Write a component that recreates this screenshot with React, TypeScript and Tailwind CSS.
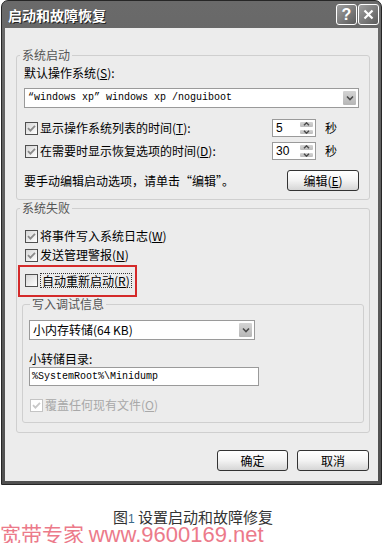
import React from "react";

const ui = "font-['Noto_Sans_CJK_SC',sans-serif]";
const mono = "font-['Liberation_Mono','Noto_Sans_CJK_SC',monospace]";

function Check({ checked = false, disabled = false }: { checked?: boolean; disabled?: boolean }) {
  return (
    <span
      className={`flex h-[13px] w-[13px] shrink-0 items-center justify-center border ${
        disabled ? "border-[#c4c4c4] bg-white" : "border-[#4f4f4f] bg-gradient-to-br from-[#d6d6d6] to-white"
      }`}
    >
      {checked && (
        <svg width="9" height="9" viewBox="0 0 9 9">
          <path d="M1 4.2 L3.4 6.6 L8 1.8" fill="none" stroke={disabled ? "#c8c8c8" : "#8a8a8a"} strokeWidth="1.8" />
        </svg>
      )}
    </span>
  );
}

function ArrowBtn() {
  return (
    <span className="flex w-[15px] items-center justify-center self-stretch rounded-[2px] border border-white bg-gradient-to-b from-[#d4d4d4] to-[#b6b6b6]">
      <svg width="8" height="6" viewBox="0 0 8 6">
        <path d="M1 1.5 L4 4.5 L7 1.5" fill="none" stroke="#4a4a4a" strokeWidth="1.6" />
      </svg>
    </span>
  );
}

function Select({ children, w }: { children: React.ReactNode; w: string }) {
  return (
    <div className={`flex h-[20px] items-stretch border border-[#9a9a9a] bg-white p-[1px] ${w}`}>
      <span className="flex flex-1 items-center pl-[2px]">{children}</span>
      <ArrowBtn />
    </div>
  );
}

function Spinner({ value }: { value: string }) {
  return (
    <div className="flex h-[18px] w-[44px] items-stretch border border-[#9a9a9a] bg-white p-[1px]">
      <span className="flex flex-1 items-center pl-[2px] font-['Liberation_Sans',sans-serif] text-[12px]">{value}</span>
      <span className="flex w-[15px] flex-col gap-[1px]">
        <span className="flex flex-1 items-center justify-center rounded-[2px] border border-white bg-gradient-to-b from-[#d4d4d4] to-[#bcbcbc]">
          <svg width="7" height="4" viewBox="0 0 7 4">
            <path d="M1 3.3 L3.5 0.8 L6 3.3" fill="none" stroke="#4a4a4a" strokeWidth="1.4" />
          </svg>
        </span>
        <span className="flex flex-1 items-center justify-center rounded-[2px] border border-white bg-gradient-to-b from-[#d4d4d4] to-[#bcbcbc]">
          <svg width="7" height="4" viewBox="0 0 7 4">
            <path d="M1 0.7 L3.5 3.2 L6 0.7" fill="none" stroke="#4a4a4a" strokeWidth="1.4" />
          </svg>
        </span>
      </span>
    </div>
  );
}

function Btn({ children, w = "w-[72px]" }: { children: React.ReactNode; w?: string }) {
  return (
    <button
      className={`h-[21px] ${w} rounded-[3px] border border-[#333] bg-gradient-to-b from-white via-[#f3f3f3] to-[#d6d6d6] text-[12px] leading-[14px] text-black`}
    >
      {children}
    </button>
  );
}

function CheckRow({
  checked = false,
  disabled = false,
  children,
}: {
  checked?: boolean;
  disabled?: boolean;
  children: React.ReactNode;
}) {
  return (
    <div className={`flex h-[16px] items-center gap-[2px] ${disabled ? "text-[#a8a8a8]" : "text-black"}`}>
      <Check checked={checked} disabled={disabled} />
      <span className="whitespace-nowrap">{children}</span>
    </div>
  );
}

export default function App() {
  return (
    <div className={`${ui} min-h-[543px] w-[385px] bg-white text-[12px] leading-[14px]`}>
      <div className="ml-[1px] flex w-[381px] flex-col rounded-t-[7px] border border-[#262626] bg-gradient-to-b from-[#6a6a6a] to-[#505050]">
        {/* title bar */}
        <div className="flex h-[27px] items-center justify-between pl-[6px] pr-[2px]">
          <span className="text-[14px] font-bold leading-[16px] text-white [text-shadow:1px_1px_0_#222]">
            启动和故障恢复
          </span>
          <div className="flex gap-[1px]">
            <span className="flex h-[21px] w-[21px] items-center justify-center rounded-[3px] border border-white bg-gradient-to-br from-[#a0a0a0] to-[#5c5c5c] font-['Liberation_Sans',sans-serif] text-[16px] font-bold text-white">
              ?
            </span>
            <span className="flex h-[21px] w-[21px] items-center justify-center rounded-[3px] border border-white bg-gradient-to-br from-[#a0a0a0] to-[#5c5c5c]">
              <svg width="11" height="11" viewBox="0 0 11 11">
                <path d="M1.5 1.5 L9.5 9.5 M9.5 1.5 L1.5 9.5" stroke="white" strokeWidth="2.2" />
              </svg>
            </span>
          </div>
        </div>

        {/* client */}
        <div className="mx-[3px] mb-[3px] flex flex-col bg-[#ececec] pl-[11px] pr-[8px] pt-[20px]">
          {/* 系统启动 */}
          <fieldset className="rounded-[3px] border border-[#cfcfcf] pb-[8px] pl-[7px] pr-[10px]">
            <legend className="-ml-[4px] px-[2px] text-[#555]">系统启动</legend>
            <div className="mt-[4px]">
              默认操作系统(<u>S</u>):
            </div>
            <Select w="mt-[8px] w-full">
              <span className={`${mono} text-[10px]`}>“windows xp” windows xp /noguiboot</span>
            </Select>
            <div className="mt-[11px] flex items-center">
              <div className="flex-1 pl-[1px]">
                <CheckRow checked>
                  显示操作系统列表的时间(<u>T</u>):
                </CheckRow>
              </div>
              <Spinner value="5" />
              <span className="w-[43px] pl-[9px]">秒</span>
            </div>
            <div className="mt-[5px] flex items-center">
              <div className="flex-1 pl-[1px]">
                <CheckRow checked>
                  在需要时显示恢复选项的时间(<u>D</u>):
                </CheckRow>
              </div>
              <Spinner value="30" />
              <span className="w-[43px] pl-[9px]">秒</span>
            </div>
            <div className="mt-[10px] flex items-center justify-between">
              <span>要手动编辑启动选项，请单击“编辑”。</span>
              <Btn>
                编辑(<u>E</u>)
              </Btn>
            </div>
          </fieldset>

          {/* 系统失败 */}
          <fieldset className="mt-[1px] rounded-[3px] border border-[#cfcfcf] pb-[9px] pl-[7px] pr-[7px]">
            <legend className="-ml-[4px] px-[2px] text-[#555]">系统失败</legend>
            <div className="mt-[13px] flex flex-col gap-[3px] pl-[1px]">
              <CheckRow checked>
                将事件写入系统日志(<u>W</u>)
              </CheckRow>
              <CheckRow checked>
                发送管理警报(<u>N</u>)
              </CheckRow>
            </div>
            <div className="-ml-[6px] mt-[2px] w-[119px] border-2 border-[#d42a2a] pb-[7px] pl-[5px] pt-[5px]">
              <div className="flex h-[16px] items-center gap-[2px]">
                <Check />
                <span className="border border-dotted border-[#333] px-[1px] leading-[13px]">
                  自动重新启动(<u>R</u>)
                </span>
              </div>
            </div>
            <fieldset className="-mx-[2px] mt-[0px] rounded-[3px] border border-[#cfcfcf] pb-[9px] pl-[6px] pr-[6px]">
              <legend className="ml-[1px] px-[2px] text-[#555]">写入调试信息</legend>
              <Select w="mt-[9px] w-[226px]">
                <span className="text-[12px]">小内存转储(64 KB)</span>
              </Select>
              <div className="mt-[12px]">小转储目录:</div>
              <div className={`mt-[1px] flex h-[19px] w-[230px] items-center border border-[#9a9a9a] bg-white pl-[2px] ${mono} text-[10px]`}>
                %SystemRoot%\Minidump
              </div>
              <div className="mt-[11px] pl-[1px]">
                <CheckRow checked disabled>
                  覆盖任何现有文件(<u>O</u>)
                </CheckRow>
              </div>
            </fieldset>
          </fieldset>

          <div className="mt-[17px] flex justify-end gap-[9px] pb-[10px] pr-[1px]">
            <Btn w="w-[71px]">确定</Btn>
            <Btn>取消</Btn>
          </div>
        </div>
      </div>

      {/* caption + watermark */}
      <div className="mt-[24px] pl-[113px] text-[15px] leading-[16px] text-[#333]">
        图<span className="font-['Liberation_Sans',sans-serif] text-[12px] text-[#3a6a8a]">1</span>
        {"  "}设置启动和故障修复
      </div>
      <div className="-mt-[3px] whitespace-nowrap text-[21px] leading-[18px] text-[#ec7a8a]">
        宽带专家 <span className="font-['Liberation_Sans',sans-serif] text-[22px]">www.9600169.net</span>
      </div>
    </div>
  );
}
